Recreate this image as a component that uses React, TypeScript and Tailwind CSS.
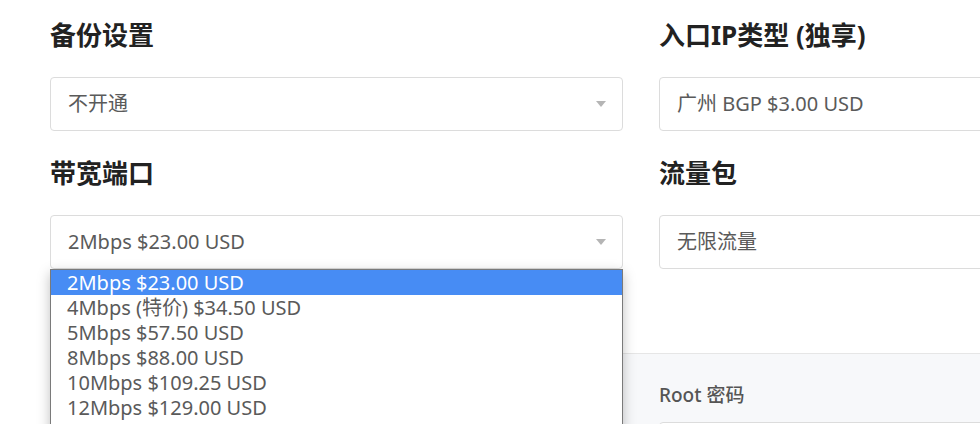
import React from "react";

const font = { fontFamily: '"Noto Sans", "Noto Sans CJK SC", sans-serif' };

const options = [
  "2Mbps $23.00 USD",
  "4Mbps (特价) $34.50 USD",
  "5Mbps $57.50 USD",
  "8Mbps $88.00 USD",
  "10Mbps $109.25 USD",
  "12Mbps $129.00 USD",
];

function Caret() {
  return (
    <svg width="10" height="6" viewBox="0 0 10 6" className="shrink-0">
      <path d="M0 0h10L5 6z" fill="#b5b5b5" />
    </svg>
  );
}

function Field({
  label,
  value,
  caret,
  children,
}: {
  label: string;
  value: string;
  caret?: boolean;
  children?: React.ReactNode;
}) {
  return (
    <div className="flex flex-col">
      <h3 className="text-[26px] leading-[30px] font-bold text-[#222] mb-[27px]">{label}</h3>
      <div className="relative mb-[27px]">
        <div className="h-[54px] border border-[#dcdcdc] rounded-[4px] bg-white flex items-center justify-between pl-[17px] pr-[16px]">
          <span className="text-[20px] text-[#5a5a5a]">{value}</span>
          {caret && <Caret />}
        </div>
        {children}
      </div>
    </div>
  );
}

export default function App() {
  return (
    <div className="w-[980px] h-[424px] overflow-hidden bg-white relative" style={font}>
      <div className="grid grid-cols-[573px_573px] gap-x-[36px] pl-[50px] pt-[20px]">
        <Field label="备份设置" value="不开通" caret />
        <Field label="入口IP类型 (独享)" value="广州 BGP $3.00 USD" />
        <div className="relative z-10">
          <Field label="带宽端口" value="2Mbps $23.00 USD" caret>
            <ul className="absolute left-0 top-full w-full border border-[#7a7a7a] bg-white shadow-[0_4px_12px_rgba(0,0,0,0.25)]">
              {options.map((o, i) => (
                <li
                  key={o}
                  className={
                    i === 0
                      ? "h-[25px] leading-[25px] pl-[16px] text-[20px] bg-[#478cf4] text-white"
                      : "h-[25px] leading-[25px] pl-[16px] text-[20px] text-[#5a5a5a]"
                  }
                >
                  {o}
                </li>
              ))}
              <li className="h-[25px]" />
            </ul>
          </Field>
        </div>
        <Field label="流量包" value="无限流量" />
        <div />
        <div className="-ml-[36px] mt-[57px] pl-[36px] border-t border-[#e6e6e6] bg-[#f7f8fa] h-[200px] pt-[28px]">
          <div className="text-[19px] font-medium text-[#555] leading-[26px]">Root 密码</div>
          <div className="mt-[14px] h-[54px] border border-[#dcdcdc] rounded-[4px] bg-white" />
        </div>
      </div>
    </div>
  );
}
